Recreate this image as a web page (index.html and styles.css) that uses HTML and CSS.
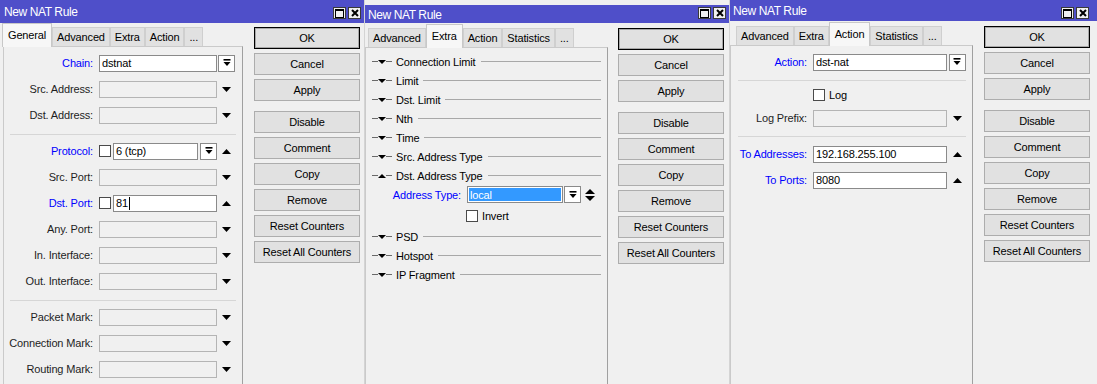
FILE: index.html
```html
<!DOCTYPE html>
<html>
<head>
<meta charset="utf-8">
<title>New NAT Rule</title>
<link rel="stylesheet" href="styles.css">
</head>
<body>
<div class="desk">

  <!-- Window 1: General -->
  <section class="win w1">
    <header class="title">
      <span class="name">New NAT Rule</span>
      <div class="tbtns">
        <span class="tb"><svg width="9" height="9" viewBox="0 0 9 9"><rect x="0.5" y="0.5" width="8" height="8" fill="none" stroke="#000"/><rect x="0" y="0" width="9" height="2"/></svg></span>
        <span class="tb"><svg width="8" height="8" viewBox="0 0 8 8"><path d="M1 1L7 7M7 1L1 7" stroke="#000" stroke-width="2"/></svg></span>
      </div>
    </header>
    <div class="wbody">
      <div class="tabcol">
        <div class="tabs">
          <span class="tab active">General</span>
          <span class="tab">Advanced</span>
          <span class="tab">Extra</span>
          <span class="tab">Action</span>
          <span class="tab">...</span>
        </div>
        <div class="panel">
          <div class="frow">
            <span class="lbl blue">Chain:</span>
            <div class="main"><span class="fld on">dstnat</span></div>
            <div class="side"><span class="combo"><svg width="8" height="8" viewBox="0 0 8 8"><rect x="0.5" y="0" width="7" height="1.6"/><path d="M0.5 3H7.5L4 7Z"/></svg></span></div>
          </div>
          <div class="frow">
            <span class="lbl">Src. Address:</span>
            <div class="main"><span class="fld"></span></div>
            <div class="side"><svg width="9" height="5" viewBox="0 0 9 5"><path d="M0 0H9L4.5 5Z"/></svg></div>
          </div>
          <div class="frow">
            <span class="lbl">Dst. Address:</span>
            <div class="main"><span class="fld"></span></div>
            <div class="side"><svg width="9" height="5" viewBox="0 0 9 5"><path d="M0 0H9L4.5 5Z"/></svg></div>
          </div>
          <div class="sep"></div>
          <div class="frow">
            <span class="lbl blue">Protocol:</span>
            <div class="main"><span class="cb"></span><span class="fld on">6 (tcp)</span><span class="combo"><svg width="8" height="8" viewBox="0 0 8 8"><rect x="0.5" y="0" width="7" height="1.6"/><path d="M0.5 3H7.5L4 7Z"/></svg></span></div>
            <div class="side"><svg width="9" height="5" viewBox="0 0 9 5"><path d="M0 5H9L4.5 0Z"/></svg></div>
          </div>
          <div class="frow">
            <span class="lbl">Src. Port:</span>
            <div class="main"><span class="fld"></span></div>
            <div class="side"><svg width="9" height="5" viewBox="0 0 9 5"><path d="M0 0H9L4.5 5Z"/></svg></div>
          </div>
          <div class="frow">
            <span class="lbl blue">Dst. Port:</span>
            <div class="main"><span class="cb"></span><span class="fld on">81<span class="caret"></span></span></div>
            <div class="side"><svg width="9" height="5" viewBox="0 0 9 5"><path d="M0 5H9L4.5 0Z"/></svg></div>
          </div>
          <div class="frow">
            <span class="lbl">Any. Port:</span>
            <div class="main"><span class="fld"></span></div>
            <div class="side"><svg width="9" height="5" viewBox="0 0 9 5"><path d="M0 0H9L4.5 5Z"/></svg></div>
          </div>
          <div class="frow">
            <span class="lbl">In. Interface:</span>
            <div class="main"><span class="fld"></span></div>
            <div class="side"><svg width="9" height="5" viewBox="0 0 9 5"><path d="M0 0H9L4.5 5Z"/></svg></div>
          </div>
          <div class="frow">
            <span class="lbl">Out. Interface:</span>
            <div class="main"><span class="fld"></span></div>
            <div class="side"><svg width="9" height="5" viewBox="0 0 9 5"><path d="M0 0H9L4.5 5Z"/></svg></div>
          </div>
          <div class="sep"></div>
          <div class="frow">
            <span class="lbl">Packet Mark:</span>
            <div class="main"><span class="fld"></span></div>
            <div class="side"><svg width="9" height="5" viewBox="0 0 9 5"><path d="M0 0H9L4.5 5Z"/></svg></div>
          </div>
          <div class="frow">
            <span class="lbl">Connection Mark:</span>
            <div class="main"><span class="fld"></span></div>
            <div class="side"><svg width="9" height="5" viewBox="0 0 9 5"><path d="M0 0H9L4.5 5Z"/></svg></div>
          </div>
          <div class="frow">
            <span class="lbl">Routing Mark:</span>
            <div class="main"><span class="fld"></span></div>
            <div class="side"><svg width="9" height="5" viewBox="0 0 9 5"><path d="M0 0H9L4.5 5Z"/></svg></div>
          </div>
        </div>
      </div>
      <div class="btncol">
        <span class="btn def">OK</span>
        <span class="btn">Cancel</span>
        <span class="btn">Apply</span>
        <span class="btn gap">Disable</span>
        <span class="btn">Comment</span>
        <span class="btn">Copy</span>
        <span class="btn">Remove</span>
        <span class="btn">Reset Counters</span>
        <span class="btn">Reset All Counters</span>
      </div>
    </div>
  </section>

  <!-- Window 2: Extra -->
  <section class="win w2">
    <header class="title">
      <span class="name">New NAT Rule</span>
      <div class="tbtns">
        <span class="tb"><svg width="9" height="9" viewBox="0 0 9 9"><rect x="0.5" y="0.5" width="8" height="8" fill="none" stroke="#000"/><rect x="0" y="0" width="9" height="2"/></svg></span>
        <span class="tb"><svg width="8" height="8" viewBox="0 0 8 8"><path d="M1 1L7 7M7 1L1 7" stroke="#000" stroke-width="2"/></svg></span>
      </div>
    </header>
    <div class="wbody">
      <div class="tabcol">
        <div class="tabs">
          <span class="tab">Advanced</span>
          <span class="tab active">Extra</span>
          <span class="tab">Action</span>
          <span class="tab">Statistics</span>
          <span class="tab">...</span>
        </div>
        <div class="panel">
          <div class="sec"><span class="d"></span><svg width="8" height="4" viewBox="0 0 8 4"><path d="M0 0H8L4 4Z"/></svg><span class="d"></span><span class="t">Connection Limit</span><span class="ln"></span></div>
          <div class="sec"><span class="d"></span><svg width="8" height="4" viewBox="0 0 8 4"><path d="M0 0H8L4 4Z"/></svg><span class="d"></span><span class="t">Limit</span><span class="ln"></span></div>
          <div class="sec"><span class="d"></span><svg width="8" height="4" viewBox="0 0 8 4"><path d="M0 0H8L4 4Z"/></svg><span class="d"></span><span class="t">Dst. Limit</span><span class="ln"></span></div>
          <div class="sec"><span class="d"></span><svg width="8" height="4" viewBox="0 0 8 4"><path d="M0 0H8L4 4Z"/></svg><span class="d"></span><span class="t">Nth</span><span class="ln"></span></div>
          <div class="sec"><span class="d"></span><svg width="8" height="4" viewBox="0 0 8 4"><path d="M0 0H8L4 4Z"/></svg><span class="d"></span><span class="t">Time</span><span class="ln"></span></div>
          <div class="sec"><span class="d"></span><svg width="8" height="4" viewBox="0 0 8 4"><path d="M0 0H8L4 4Z"/></svg><span class="d"></span><span class="t">Src. Address Type</span><span class="ln"></span></div>
          <div class="sec"><span class="d"></span><svg width="8" height="4" viewBox="0 0 8 4"><path d="M0 4H8L4 0Z"/></svg><span class="d"></span><span class="t">Dst. Address Type</span><span class="ln"></span></div>
          <div class="arow">
            <span class="albl">Address Type:</span>
            <span class="fld sel">local</span>
            <span class="combo"><svg width="8" height="8" viewBox="0 0 8 8"><rect x="0.5" y="0" width="7" height="1.6"/><path d="M0.5 3H7.5L4 7Z"/></svg></span>
            <svg class="ud" width="10" height="12" viewBox="0 0 10 12"><path d="M0 5H10L5 0Z"/><path d="M0 7H10L5 12Z"/></svg>
          </div>
          <div class="irow"><span class="cb"></span><span class="itxt">Invert</span></div>
          <div class="sec"><span class="d"></span><svg width="8" height="4" viewBox="0 0 8 4"><path d="M0 0H8L4 4Z"/></svg><span class="d"></span><span class="t">PSD</span><span class="ln"></span></div>
          <div class="sec"><span class="d"></span><svg width="8" height="4" viewBox="0 0 8 4"><path d="M0 0H8L4 4Z"/></svg><span class="d"></span><span class="t">Hotspot</span><span class="ln"></span></div>
          <div class="sec"><span class="d"></span><svg width="8" height="4" viewBox="0 0 8 4"><path d="M0 0H8L4 4Z"/></svg><span class="d"></span><span class="t">IP Fragment</span><span class="ln"></span></div>
        </div>
      </div>
      <div class="btncol">
        <span class="btn def">OK</span>
        <span class="btn">Cancel</span>
        <span class="btn">Apply</span>
        <span class="btn gap">Disable</span>
        <span class="btn">Comment</span>
        <span class="btn">Copy</span>
        <span class="btn">Remove</span>
        <span class="btn">Reset Counters</span>
        <span class="btn">Reset All Counters</span>
      </div>
    </div>
  </section>

  <!-- Window 3: Action -->
  <section class="win w3">
    <header class="title">
      <span class="name">New NAT Rule</span>
      <div class="tbtns">
        <span class="tb"><svg width="9" height="9" viewBox="0 0 9 9"><rect x="0.5" y="0.5" width="8" height="8" fill="none" stroke="#000"/><rect x="0" y="0" width="9" height="2"/></svg></span>
        <span class="tb"><svg width="8" height="8" viewBox="0 0 8 8"><path d="M1 1L7 7M7 1L1 7" stroke="#000" stroke-width="2"/></svg></span>
      </div>
    </header>
    <div class="wbody">
      <div class="tabcol">
        <div class="tabs">
          <span class="tab">Advanced</span>
          <span class="tab">Extra</span>
          <span class="tab active">Action</span>
          <span class="tab">Statistics</span>
          <span class="tab">...</span>
        </div>
        <div class="panel">
          <div class="frow">
            <span class="lbl blue">Action:</span>
            <div class="main"><span class="fld on">dst-nat</span></div>
            <div class="side"><span class="combo"><svg width="8" height="8" viewBox="0 0 8 8"><rect x="0.5" y="0" width="7" height="1.6"/><path d="M0.5 3H7.5L4 7Z"/></svg></span></div>
          </div>
          <div class="sep"></div>
          <div class="frow logrow">
            <span class="lbl"></span>
            <div class="main"><span class="cb"></span><span class="ctxt">Log</span></div>
          </div>
          <div class="frow">
            <span class="lbl">Log Prefix:</span>
            <div class="main"><span class="fld"></span></div>
            <div class="side"><svg width="9" height="5" viewBox="0 0 9 5"><path d="M0 0H9L4.5 5Z"/></svg></div>
          </div>
          <div class="sep"></div>
          <div class="frow">
            <span class="lbl blue">To Addresses:</span>
            <div class="main"><span class="fld on">192.168.255.100</span></div>
            <div class="side"><svg width="9" height="5" viewBox="0 0 9 5"><path d="M0 5H9L4.5 0Z"/></svg></div>
          </div>
          <div class="frow">
            <span class="lbl blue">To Ports:</span>
            <div class="main"><span class="fld on">8080</span></div>
            <div class="side"><svg width="9" height="5" viewBox="0 0 9 5"><path d="M0 5H9L4.5 0Z"/></svg></div>
          </div>
        </div>
      </div>
      <div class="btncol">
        <span class="btn def">OK</span>
        <span class="btn">Cancel</span>
        <span class="btn">Apply</span>
        <span class="btn gap">Disable</span>
        <span class="btn">Comment</span>
        <span class="btn">Copy</span>
        <span class="btn">Remove</span>
        <span class="btn">Reset Counters</span>
        <span class="btn">Reset All Counters</span>
      </div>
    </div>
  </section>

</div>
</body>
</html>
```

FILE: styles.css
```css
* { box-sizing: border-box; }
html, body { margin: 0; padding: 0; }
body {
  width: 1097px;
  height: 384px;
  overflow: hidden;
  background: #f0f0f0;
  font-family: "Liberation Sans", Arial, sans-serif;
  font-size: 11px;
  letter-spacing: -0.15px;
  color: #000;
}
svg { display: block; fill: #000; }

.desk { display: flex; height: 384px; }

.win {
  display: flex;
  flex-direction: column;
  height: 384px;
  flex: none;
  background: #f0f0f0;
}
.w1 { width: 365px; border-right: 1px solid #d4d4d4; }
.w2 { width: 365px; padding-top: 5px; border-right: 1px solid #d4d4d4; }
.w3 { width: 367px; }

/* title bar */
.title {
  display: flex;
  align-items: center;
  flex: none;
  background: #4f4fc9;
  color: #fff;
  padding-left: 4px;
}
.w1 .title { height: 23px; }
.w2 .title { height: 18px; padding-left: 3px; }
.w3 .title { height: 21px; padding-left: 3px; }
.title .name { flex: 1; padding-top: 1px; font-size: 12px; letter-spacing: -0.4px; }
.tbtns {
  display: flex;
  gap: 2px;
  align-self: flex-start;
  margin-top: 7px;
  margin-right: 3px;
}
.w2 .tbtns { margin-top: 2px; }
.w3 .tbtns { margin-right: 8px; }
.tb {
  width: 13px;
  height: 12px;
  background: #f0f0f0;
  border: 1px solid #3a3a3a;
  display: flex;
  align-items: center;
  justify-content: center;
}

/* body */
.wbody { display: flex; flex: 1; min-height: 0; }
.w1 .wbody { padding-left: 3px; }
.tabcol { display: flex; flex-direction: column; flex: none; }
.w1 .tabcol { width: 240px; }
.w2 .tabcol, .w3 .tabcol { width: 243px; }

/* tabs */
.tabs {
  display: flex;
  align-items: flex-end;
  flex: none;
  height: 23px;
  position: relative;
  z-index: 1;
}
.w1 .tabs { margin-left: -1px; }
.w2 .tabs { height: 24px; padding-left: 3px; }
.w3 .tabs { height: 24px; padding-left: 6px; }
.tab {
  height: 19px;
  padding: 0 4px;
  background: #e1e1e1;
  border: 1px solid #cfcfcf;
  border-bottom: none;
  display: flex;
  align-items: center;
  white-space: nowrap;
}
.tab.active {
  height: 24px;
  margin-bottom: -1px;
  padding: 0 5px 2px;
  background: #f7f7f7;
  border-color: #c8c8c8;
}

/* panel */
.panel {
  flex: 1;
  display: flex;
  flex-direction: column;
  background: #f0f0f0;
  border: 1px solid #cacaca;
  border-bottom: none;
  border-right-color: #a0a0a0;
}
.w1 .panel { padding-top: 3px; }
.w2 .panel { padding-top: 4px; }
.w3 .panel { padding-top: 3px; }

/* form rows */
.frow { display: flex; align-items: center; height: 26px; flex: none; }
.lbl { flex: none; text-align: right; white-space: nowrap; color: #1e1e1e; margin-right: 6px; }
.w1 .lbl { width: 89px; }
.w3 .lbl { width: 76px; }
.lbl.blue { color: #0000ff; }
.main { display: flex; align-items: center; gap: 2px; flex: none; }
.w1 .main { width: 118px; }
.w3 .main { width: 134px; }
.side { display: flex; align-items: center; justify-content: center; flex: none; width: 17px; margin-left: 1px; }
.w3 .side { width: 18px; }

.fld {
  flex: 1;
  min-width: 0;
  height: 17px;
  border: 1px solid #b4b4b4;
  background: #f0f0f0;
  padding: 0 2px;
  display: flex;
  align-items: center;
  white-space: nowrap;
  overflow: hidden;
}
.fld.on { background: #fff; border-color: #8a8a8a; }
.caret { display: inline-block; width: 1px; height: 13px; background: #000; margin-left: 1px; }
.cb { width: 12px; height: 12px; border: 1px solid #4a4a4a; background: #fff; flex: none; }
.combo {
  width: 17px;
  height: 17px;
  border: 1px solid #8a8a8a;
  background: #fff;
  display: flex;
  align-items: center;
  justify-content: center;
  flex: none;
}

.sep { height: 1px; background: #d6d6d6; flex: none; }
.w1 .sep { margin: 6px 6px 3px 6px; }
.w3 .sep { margin: 5px 6px 4px 7px; }

.logrow { height: 20px; }
.ctxt { margin-left: 2px; }

/* extra tab sections */
.sec { display: flex; align-items: center; height: 19px; flex: none; padding: 0 6px; }
.sec .d { width: 6px; height: 1px; background: #6a6a6a; flex: none; }
.sec svg { flex: none; }
.sec .t { margin: 0 5px 0 4px; white-space: nowrap; }
.sec .ln { flex: 1; height: 1px; background: #a8a8a8; }

.arow { display: flex; align-items: center; height: 19px; flex: none; }
.albl { width: 95px; text-align: right; color: #0000ff; margin-right: 6px; flex: none; white-space: nowrap; }
.arow .fld { flex: none; width: 96px; margin-right: 1px; }
.fld.sel { background: #3399ff; color: #fff; border-color: #8a8a8a; box-shadow: inset 0 0 0 1px #fff; padding: 0 2px; }
.arow .ud { margin-left: 4px; }

.irow { display: flex; align-items: center; height: 23px; flex: none; padding: 1px 0 0 100px; }
.itxt { margin-left: 4px; }

/* buttons column */
.btncol { display: flex; flex-direction: column; gap: 4px; width: 106px; flex: none; margin-left: 11px; }
.w1 .btncol { padding-top: 4px; }
.w2 .btncol { margin-left: 10px; padding-top: 5px; }
.w3 .btncol { padding-top: 5px; }
.btn {
  height: 22px;
  border: 1px solid #adadad;
  background: #e1e1e1;
  display: flex;
  align-items: center;
  justify-content: center;
  white-space: nowrap;
  flex: none;
}
.btn.def { border-color: #000; box-shadow: inset 0 0 0 1px rgba(0,0,0,0.25); }
.btn.gap { margin-top: 6px; }
```
